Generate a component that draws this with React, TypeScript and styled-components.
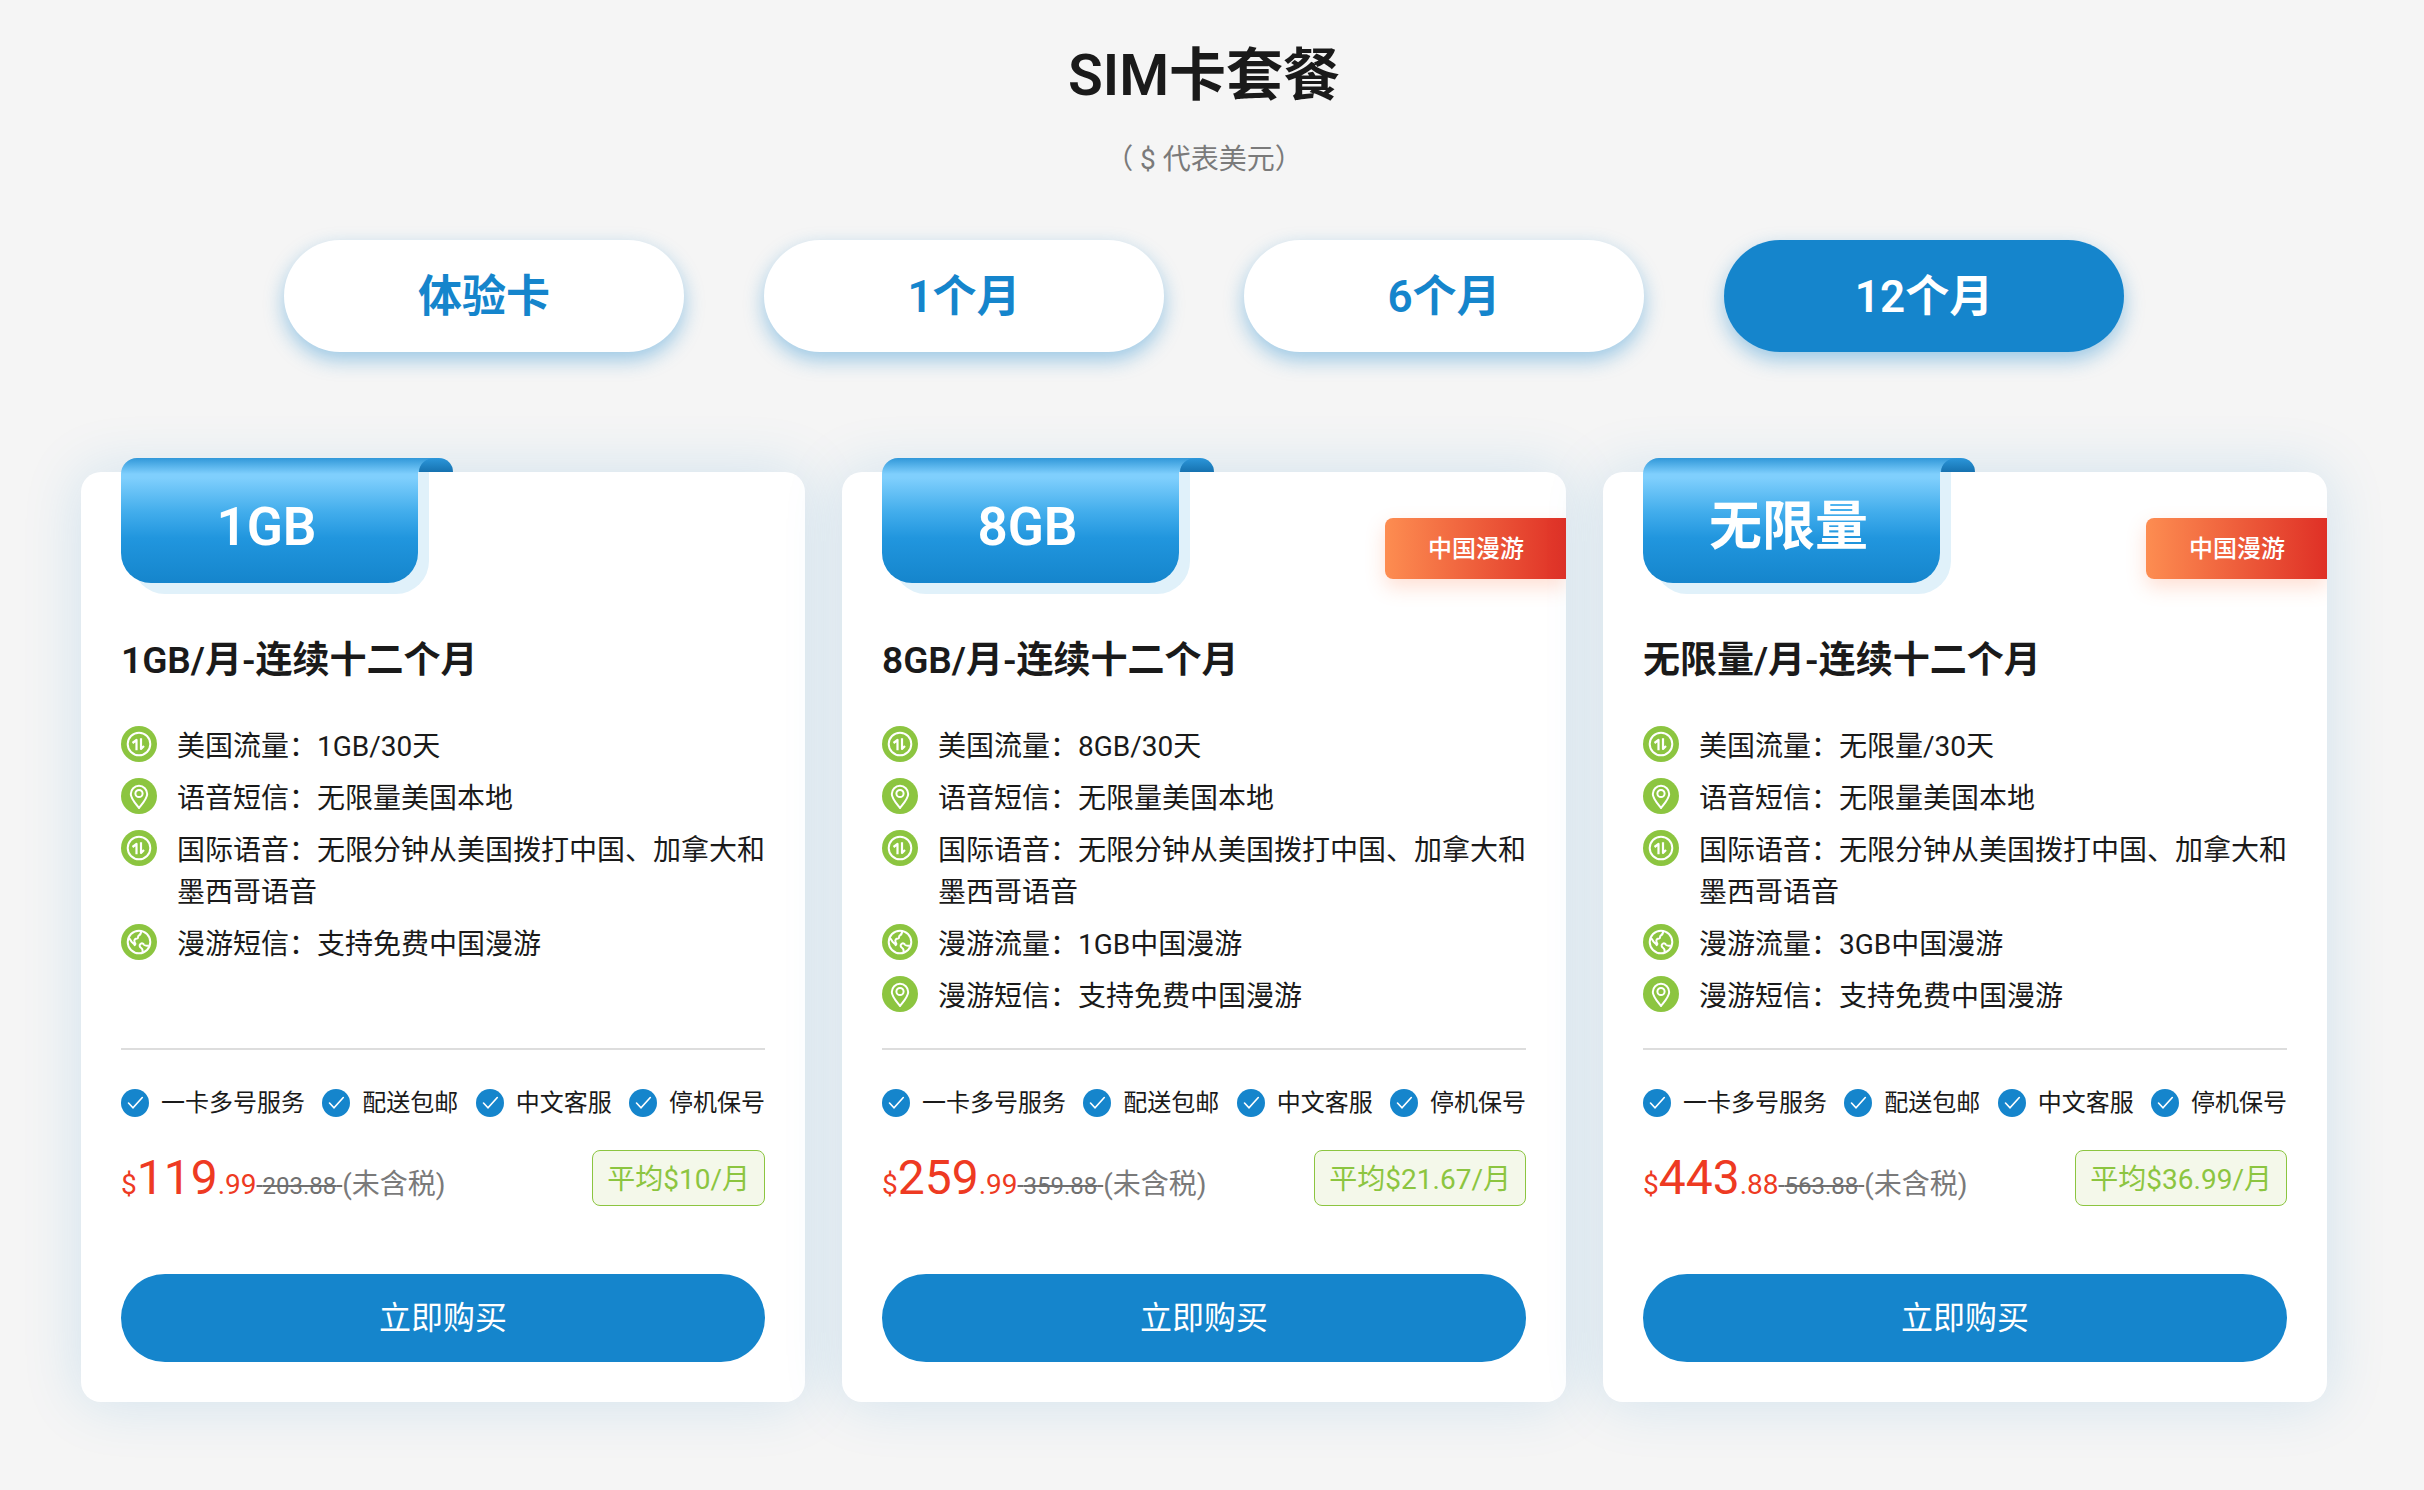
import React, { useState } from 'react';
import styled, { createGlobalStyle, css } from 'styled-components';

const blue = '#1585cc';
const ink = '#1a1a1a';
const green = '#8cc540';
const red = '#ee3a22';

const GlobalStyle = createGlobalStyle`
  *, *::before, *::after { box-sizing: border-box; }
  body {
    margin: 0;
    background: #f5f5f5;
    color: ${ink};
    font-family: Roboto, 'Noto Sans CJK SC', sans-serif;
    font-size: 28px;
    line-height: 42px;
  }
  h1, h2, p, ul { margin: 0; padding: 0; }
  ul { list-style: none; }
  button { font-family: inherit; border: 0; cursor: pointer; }
`;

const Page = styled.main`
  padding: 34px 97px 88px 81px;
`;

const Heading = styled.header`
  text-align: center;
`;

const Title = styled.h1`
  font-size: 57px;
  line-height: 84px;
  font-weight: 600;
`;

const Note = styled.p`
  margin-top: 21px;
  color: #7a7a7a;
`;

const Tabs = styled.nav`
  display: flex;
  justify-content: center;
  gap: 80px;
  margin-top: 59px;
`;

const Tab = styled.button<{ $active: boolean }>`
  width: 400px;
  height: 112px;
  padding: 0 0 6px;
  border-radius: 56px;
  font-size: 44px;
  font-weight: 600;
  color: ${blue};
  background: #fff;
  box-shadow: 0 8px 20px rgba(21, 133, 204, 0.4);
  ${(p) =>
    p.$active &&
    css`
      color: #fff;
      background: ${blue};
    `}
`;

const Plans = styled.section`
  display: grid;
  grid-template-columns: repeat(3, 1fr);
  gap: 37px;
  margin-top: 120px;
`;

const Card = styled.article`
  position: relative;
  display: flex;
  flex-direction: column;
  padding: 0 40px 40px;
  border-radius: 20px;
  background: #fff;
  box-shadow: 0 0 60px rgba(21, 133, 204, 0.16);
`;

const Ribbon = styled.div`
  position: relative;
  display: flex;
  align-items: center;
  justify-content: center;
  width: 297px;
  height: 125px;
  margin-top: -14px;
  padding: 12px 6px 0 0;
  color: #fff;
  font-size: 53px;
  font-weight: 600;
  border-radius: 16px 0 30px 30px;
  background: linear-gradient(#3198d9 0, #7fcffd 16px, #7fcffd 20px, #42adec 54px, #2196de 80px, ${blue} 125px);
`;

const RibbonShade = styled.span`
  position: absolute;
  left: 11px;
  top: 0;
  width: 297px;
  height: 122px;
  border-radius: 0 0 33px 33px;
  background: #e0f1fa;
`;

const RibbonWrap = styled.div`
  position: relative;
  display: flex;
`;

const RibbonFold = styled.svg`
  position: absolute;
  left: 297px;
  top: -14px;
`;

const Roaming = styled.span`
  position: absolute;
  right: 0;
  top: 46px;
  padding: 13px 42px 12px 43px;
  font-size: 24px;
  line-height: 36px;
  font-weight: 500;
  color: #fff;
  border-radius: 8px 0 0 8px;
  background: linear-gradient(90deg, #fd8d51, #df3026);
  box-shadow: 0 8px 20px rgba(253, 120, 70, 0.24);
  clip-path: inset(-30px 0 -30px -30px);
`;

const PlanName = styled.h2`
  margin-top: 51px;
  font-size: 37px;
  line-height: 54px;
  font-weight: 600;
`;

const Features = styled.ul`
  flex: 1;
  display: flex;
  flex-direction: column;
  gap: 10px;
  margin-top: 38px;
  padding-bottom: 30px;
  border-bottom: 2px solid #dddddd;
`;

const Feature = styled.li`
  display: flex;
  gap: 20px;
  svg { flex: none; }
`;

const Perks = styled.ul`
  display: flex;
  justify-content: space-between;
  margin-top: 35px;
  font-size: 24px;
  line-height: 36px;
`;

const Perk = styled.li`
  display: flex;
  align-items: center;
  gap: 12px;
  white-space: nowrap;
`;

const PriceRow = styled.div`
  display: flex;
  justify-content: space-between;
  align-items: center;
  height: 56px;
  margin-top: 29px;
`;

const Price = styled.p`
  padding-top: 8px;
  color: ${red};
  line-height: 56px;
  white-space: nowrap;
`;

const Whole = styled.span`
  font-size: 48px;
`;

const Was = styled.del`
  font-size: 24px;
  color: #707070;
  white-space: pre;
`;

const Tax = styled.span`
  color: #7a7a7a;
`;

const Average = styled.span`
  height: 56px;
  padding: 2px 14px 0;
  line-height: 54px;
  color: ${green};
  border: 1px solid ${green};
  border-radius: 8px;
  background: #f4f8ea;
`;

const Buy = styled.button`
  width: 100%;
  height: 88px;
  margin-top: 68px;
  padding: 0 0 6px;
  border-radius: 44px;
  font-size: 32px;
  color: #fff;
  background: ${blue};
`;

type IconName = 'data' | 'pin' | 'globe';

const shapes: Record<IconName, React.ReactNode> = {
  data: (
    <>
      <circle cx="18" cy="18" r="11.3" />
      <path d="M11.500 17l4-3v10.300" strokeWidth="2.200" />
      <path d="M20 12.300v10.700l3-3" strokeWidth="2.200" />
    </>
  ),
  pin: (
    <>
      <path d="M18 30c-4.500-5.600-8.200-9.600-8.200-14a8.200 8.200 0 0 1 16.400 0c0 4.400-3.700 8.400-8.200 14z" />
      <circle cx="18" cy="15.500" r="3.600" />
    </>
  ),
  globe: (
    <>
      <circle cx="18" cy="18" r="11.300" />
      <path d="M7.500 13.800c1.800 1 2 2.800 3.400 4.400 1 1.200 2.200 1.600 2.800 3 .8-1 .8-2-.2-3.200-.6-2 .6-3.600 2.600-3.600 1.800-.2.2-1.800 1.600-2.800 1.600-.8 2.400-1.800 2.400-4.400" />
      <path d="M21.500 28.500c.4-2-.1-3.700-1.300-4.500-1.600-1-2.200-2.800-.8-4 1.400-1 2.900-.8 3.500.6.600 1.200 2.300 1.200 5 1.200" />
    </>
  ),
};

const FeatureIcon = ({ name }: { name: IconName }) => (
  <svg width="36" height="36" viewBox="0 0 36 36" fill="none" stroke="#fff" strokeWidth="2" strokeLinejoin="round" aria-hidden="true">
    <circle cx="18" cy="18" r="18" fill={green} stroke="none" />
    {shapes[name]}
  </svg>
);

const Tick = () => (
  <svg width="28" height="28" viewBox="0 0 28 28" fill="none" aria-hidden="true">
    <circle cx="14" cy="14" r="14" fill={blue} />
    <path d="M7.500 14l4.500 4.800L21.300 8.500" stroke="#fff" strokeWidth="1.600" strokeLinecap="round" />
  </svg>
);

const Fold = () => (
  <RibbonFold width="35" height="14" viewBox="0 0 35 14" aria-hidden="true">
    <defs>
      <linearGradient id="fold" x1="0" y1="0" x2="0" y2="1">
        <stop offset="0" stopColor="#2b96da" />
        <stop offset="1" stopColor="#1672b0" />
      </linearGradient>
      <linearGradient id="edge" gradientUnits="userSpaceOnUse" x1="0" y1="0" x2="0" y2="16">
        <stop offset="0" stopColor="#3198d9" />
        <stop offset="1" stopColor="#7fcffd" />
      </linearGradient>
    </defs>
    <path d="M0 14V0h21a14 14 0 0 1 14 14z" fill="url(#fold)" />
    <path d="M0 14V0h17C8 0 1 6 1 14z" fill="url(#edge)" />
  </RibbonFold>
);

const tabs = ['体验卡', '1个月', '6个月', '12个月'];
const perks = ['一卡多号服务', '配送包邮', '中文客服', '停机保号'];

interface Plan {
  size: string;
  roaming: boolean;
  features: [IconName, string][];
  whole: string;
  cents: string;
  was: string;
  average: string;
}

const calls = '国际语音：无限分钟从美国拨打中国、加拿大和墨西哥语音';

const plans: Plan[] = [
  {
    size: '1GB',
    roaming: false,
    features: [
      ['data', '美国流量：1GB/30天'],
      ['pin', '语音短信：无限量美国本地'],
      ['data', calls],
      ['globe', '漫游短信：支持免费中国漫游'],
    ],
    whole: '119',
    cents: '.99',
    was: '203.88',
    average: '10',
  },
  {
    size: '8GB',
    roaming: true,
    features: [
      ['data', '美国流量：8GB/30天'],
      ['pin', '语音短信：无限量美国本地'],
      ['data', calls],
      ['globe', '漫游流量：1GB中国漫游'],
      ['pin', '漫游短信：支持免费中国漫游'],
    ],
    whole: '259',
    cents: '.99',
    was: '359.88',
    average: '21.67',
  },
  {
    size: '无限量',
    roaming: true,
    features: [
      ['data', '美国流量：无限量/30天'],
      ['pin', '语音短信：无限量美国本地'],
      ['data', calls],
      ['globe', '漫游流量：3GB中国漫游'],
      ['pin', '漫游短信：支持免费中国漫游'],
    ],
    whole: '443',
    cents: '.88',
    was: '563.88',
    average: '36.99',
  },
];

const PlanCard = ({ plan }: { plan: Plan }) => (
  <Card>
    <RibbonWrap>
      <RibbonShade />
      <Fold />
      <Ribbon>{plan.size}</Ribbon>
    </RibbonWrap>
    {plan.roaming && <Roaming>中国漫游</Roaming>}
    <PlanName>{plan.size}/月-连续十二个月</PlanName>
    <Features>
      {plan.features.map(([icon, text]) => (
        <Feature key={text}>
          <FeatureIcon name={icon} />
          <span>{text}</span>
        </Feature>
      ))}
    </Features>
    <Perks>
      {perks.map((perk) => (
        <Perk key={perk}>
          <Tick />
          {perk}
        </Perk>
      ))}
    </Perks>
    <PriceRow>
      <Price>
        $<Whole>{plan.whole}</Whole>
        {plan.cents}
        <Was> {plan.was} </Was>
        <Tax>(未含税)</Tax>
      </Price>
      <Average>平均${plan.average}/月</Average>
    </PriceRow>
    <Buy type="button">立即购买</Buy>
  </Card>
);

export default function App() {
  const [active, setActive] = useState(3);
  return (
    <Page lang="zh-CN">
      <GlobalStyle />
      <Heading>
        <Title>SIM卡套餐</Title>
        <Note>（ $ 代表美元）</Note>
      </Heading>
      <Tabs>
        {tabs.map((label, i) => (
          <Tab key={label} type="button" $active={i === active} aria-pressed={i === active} onClick={() => setActive(i)}>
            {label}
          </Tab>
        ))}
      </Tabs>
      <Plans>
        {plans.map((plan) => (
          <PlanCard key={plan.size} plan={plan} />
        ))}
      </Plans>
    </Page>
  );
}
